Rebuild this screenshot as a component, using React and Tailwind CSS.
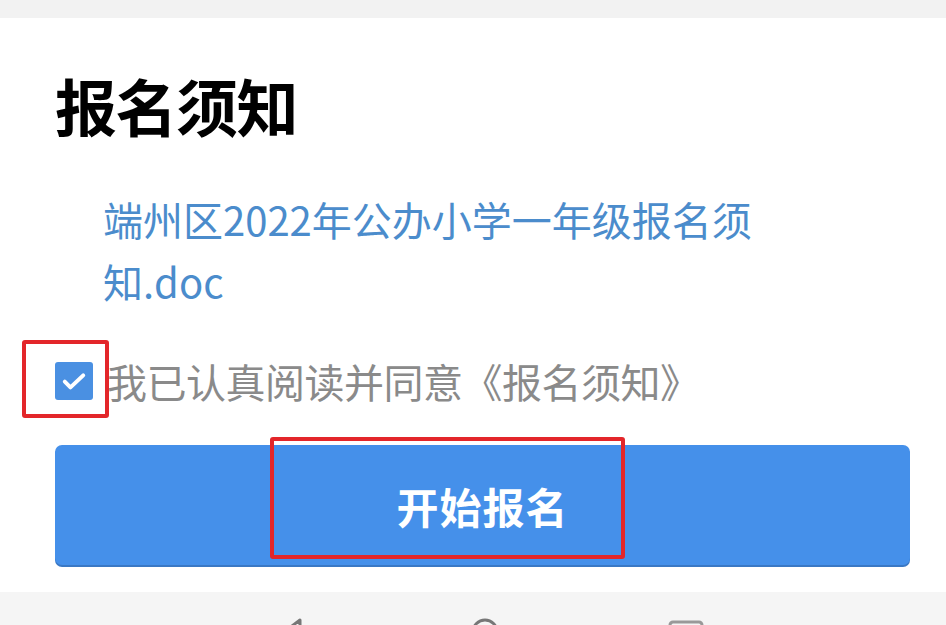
import React, { useState } from 'react'

const cjk = { fontFamily: '"Noto Sans CJK SC", "Noto Sans", sans-serif' }

export default function App(){
  const [agreed, setAgreed] = useState(true)
  return (
    <div className="w-[946px] h-[625px] overflow-hidden flex flex-col bg-white" style={cjk}>
      <div className="h-[18px] bg-[#f2f2f2] shrink-0" />
      <div className="flex-1 bg-white pl-[55px] pr-[36px] pt-[50px] relative">
        <h1 className="text-[62px] leading-[74px] font-bold text-black tracking-[-1.5px]">报名须知</h1>
        <div className="pl-[48px] mt-[46px] text-[40px] leading-[62px] text-[#4b8ccc] w-[760px]">
          端州区2022年公办小学一年级报名须知.doc
        </div>
        <label className="mt-[45px] flex items-center cursor-pointer">
          <span className="relative w-[38px] h-[38px] shrink-0">
            <input type="checkbox" checked={agreed} onChange={e=>setAgreed(e.target.checked)} className="absolute inset-0 opacity-0" />
            <span className={`flex items-center justify-center w-[38px] h-[38px] rounded-[3px] ${agreed ? 'bg-[#4a90e2]' : 'border-2 border-gray-300 bg-white'}`}>
              {agreed && (
                <svg width="34" height="34" viewBox="0 0 24 24" fill="none" stroke="white" strokeWidth="2.8" strokeLinecap="round" strokeLinejoin="round">
                  <path d="M5.5 12.5l4 4L18.5 8" />
                </svg>
              )}
            </span>
            <span className="absolute left-[-33px] top-[-22px] w-[87px] h-[78px] border-[4px] border-[#e3262a] rounded-[3px] pointer-events-none" />
          </span>
          <span className="ml-[14px] text-[40px] leading-[48px] text-[#8a8a8a] tracking-[-0.5px]">我已认真阅读并同意《报名须知》</span>
        </label>
        <div className="relative mt-[40px]">
          <button className="w-full h-[120px] rounded-[7px] bg-[#4590ea] shadow-[0_2px_0_#3a78c4] text-white text-[42px] font-bold tracking-[1px]">
            开始报名
          </button>
          <span className="absolute left-[215px] top-[-8px] w-[355px] h-[122px] border-[4px] border-[#e3262a] rounded-[3px] pointer-events-none" />
        </div>
      </div>
      <div className="h-[33px] bg-[#f5f5f5] shrink-0 relative overflow-hidden">
        <svg className="absolute left-[280px] top-[26px]" width="24" height="28" viewBox="0 0 24 28" fill="none" stroke="#777" strokeWidth="3">
          <path d="M20 2L4 14l16 12z" strokeLinejoin="round" />
        </svg>
        <svg className="absolute left-[471px] top-[26px]" width="28" height="28" viewBox="0 0 28 28" fill="none" stroke="#777" strokeWidth="3">
          <circle cx="14" cy="14" r="12" />
        </svg>
        <svg className="absolute left-[668px] top-[28px]" width="36" height="28" viewBox="0 0 36 28" fill="none" stroke="#999" strokeWidth="3">
          <rect x="2" y="2" width="32" height="24" rx="3" />
        </svg>
      </div>
    </div>
  )
}
